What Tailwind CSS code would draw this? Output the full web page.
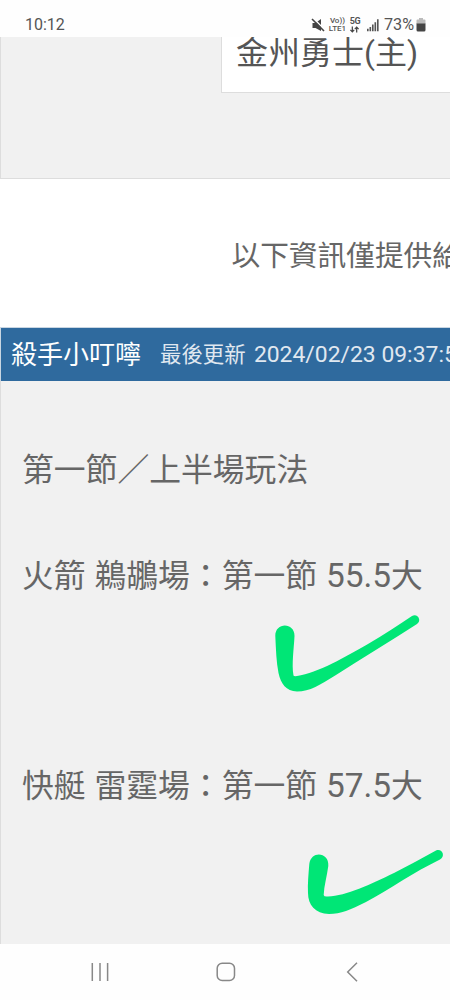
<!DOCTYPE html>
<html lang="zh-Hant">
<head>
  <meta charset="UTF-8">
  <meta name="viewport" content="width=device-width, initial-scale=1.0">
  <title>殺手小叮嚀</title>
  <script src="https://cdn.jsdelivr.net/npm/@tailwindcss/browser@4"></script>
</head>
<body class="bg-white font-['Roboto','Noto_Sans_CJK_TC',sans-serif] text-[#666]">
  <div class="relative w-[450px] h-[1000px] overflow-hidden flex flex-col whitespace-nowrap">

    <!-- status bar -->
    <header class="h-[37px] shrink-0 flex items-start justify-between bg-[#fefefe] pl-[25px] pr-[24px] text-[#555]">
      <span class="mt-[15px] text-[16px] leading-[20px]">10:12</span>
      <div class="flex items-start">
        <svg class="mt-[18px] w-[15px] h-[15px]" viewBox="0 0 15 15">
          <path d="M1.500 5h3L10 1v12L4.500 10h-3z" fill="#444"/>
          <path d="M2 0l13 13" stroke="#fefefe" stroke-width="1.500"/>
          <path d="M1 1l12 12" stroke="#444" stroke-width="1.600"/>
        </svg>
        <div class="ml-[3px] mt-[17px] w-[17px] flex flex-col items-center text-[8px] leading-[8px] font-medium">
          <p>Vo))</p>
          <p>LTE1</p>
        </div>
        <div class="ml-[3px] mt-[17px] w-[12px] flex flex-col items-center">
          <p class="text-[9px] leading-[9px] font-bold tracking-[-0.5px]">5G</p>
          <svg class="w-[11px] h-[7px]" viewBox="0 0 11 8" fill="none" stroke="#444" stroke-width="1.400">
            <path d="M3 .5v6M.8 4.500L3 6.700l2.200-2.200M8 7.500v-6M5.800 3.500L8 1.300l2.200 2.200"/>
          </svg>
        </div>
        <svg class="ml-[6px] mt-[19px] w-[12px] h-[13px]" viewBox="0 0 12.500 13" fill="#555">
          <path d="M0 10h1.700v2.500H0zM2.600 8h1.700v4.500H2.600zM5.200 5.500h1.700v7H5.200zM7.800 3h1.700v9.500H7.800zM10.400 0h1.700v12.500h-1.700z"/>
        </svg>
        <span class="ml-[5px] mt-[15px] text-[16.200px] leading-[20px]">73%</span>
        <svg class="ml-[2px] mt-[18px] w-[10px] h-[14px]" viewBox="0 0 10 14">
          <path d="M3 0h4v1.500h1.500a1 1 0 0 1 1 1V6h-9V2.500a1 1 0 0 1 1-1H3z" fill="#bbb"/>
          <path d="M.5 5.500h9V12a1.500 1.500 0 0 1-1.500 1.500H2A1.500 1.500 0 0 1 .5 12z" fill="#444"/>
        </svg>
      </div>
    </header>

    <!-- scrolled page -->
    <main class="flex-1 overflow-hidden">
      <section class="h-[142px] bg-[#f1f1f1] border-l border-b border-[#ddd]">
        <div class="ml-[220px] h-[56px] bg-white border-l border-b border-[#ddd] pl-[14px]">
          <p class="text-[32px] leading-[32px] text-[#555]">金州勇士(主)</p>
        </div>
      </section>

      <p class="h-[148px] pl-[231.500px] pt-[53px] text-[28.700px] leading-[48px]">以下資訊僅提供給</p>

      <section>
        <div class="h-[54px] flex items-center bg-[#2f6a9e] border-l border-t border-[#c9d6e2] pl-[10px] pt-px">
          <h2 class="text-[26px] leading-[40px] text-white">殺手小叮嚀</h2>
          <p class="ml-[19px] text-[21.400px] leading-[40px] text-[#e0e8f0]">最後更新 <span class="ml-[3px] text-[22.900px]">2024/02/23 09:37:5</span></p>
        </div>
        <div class="h-[563px] bg-[#f1f1f1] border-l border-[#ddd] pl-[21px] text-[31.800px] leading-[48px] [word-spacing:1px]">
          <p class="pt-[65px]">第一節／上半場玩法</p>
          <p class="pt-[58px]">火箭 鵜鶘場：第一節 <span class="text-[33.400px]">55.5</span>大</p>
          <p class="pt-[162px]">快艇 雷霆場：第一節 <span class="text-[33.400px]">57.5</span>大</p>
        </div>
      </section>
    </main>

    <!-- system navigation -->
    <nav class="h-[56px] shrink-0 flex bg-[#fefefe] pt-[18px]">
      <svg class="ml-[90px] w-5 h-5" viewBox="0 0 20 20" stroke="#888" stroke-width="1.500">
        <path d="M2.300 1v18M10 1v18M17.600 1v18"/>
      </svg>
      <svg class="ml-[106px] w-5 h-5" viewBox="0 0 20 20" fill="none" stroke="#888" stroke-width="1.500">
        <rect x="1.200" y="1.200" width="17.300" height="17.300" rx="5"/>
      </svg>
      <svg class="ml-[106px] w-5 h-5" viewBox="0 0 20 20" fill="none" stroke="#888" stroke-width="1.500">
        <path d="M15 .8L5.700 10l9.300 9.200"/>
      </svg>
    </nav>

    <!-- hand drawn ticks -->
    <svg class="absolute inset-0 w-[450px] h-[1000px]" viewBox="0 0 450 1000" fill="#00e676">
      <path d="M275.300 636C275 622 294.700 622 294.500 636C294 648 291.500 664 293.500 675.500Q294 676.500 297 676C318 673 345 657 368 644C384 635 398 625 412 616C418 613 422 621 417 624C389 642 362 658 336 675C320 685 310 691.500 297 691.500C286 691 281 684 278.500 673C276.300 662 276 650 275.300 636Z"/>
      <path d="M309.300 864C311 850 329.500 852 328.300 866C327 876 324 886 323.700 895Q324 897 328 896.500C346 896 371 884 394 873C408 866 422 858 436 850.500C442 848 446 856 440 859.500C414 872 390 889 366 902C350 910 341 914 329 914C315 913.500 308 905 308 893C307.500 884 308.500 874 309.300 864Z"/>
    </svg>
  </div>
</body>
</html>
